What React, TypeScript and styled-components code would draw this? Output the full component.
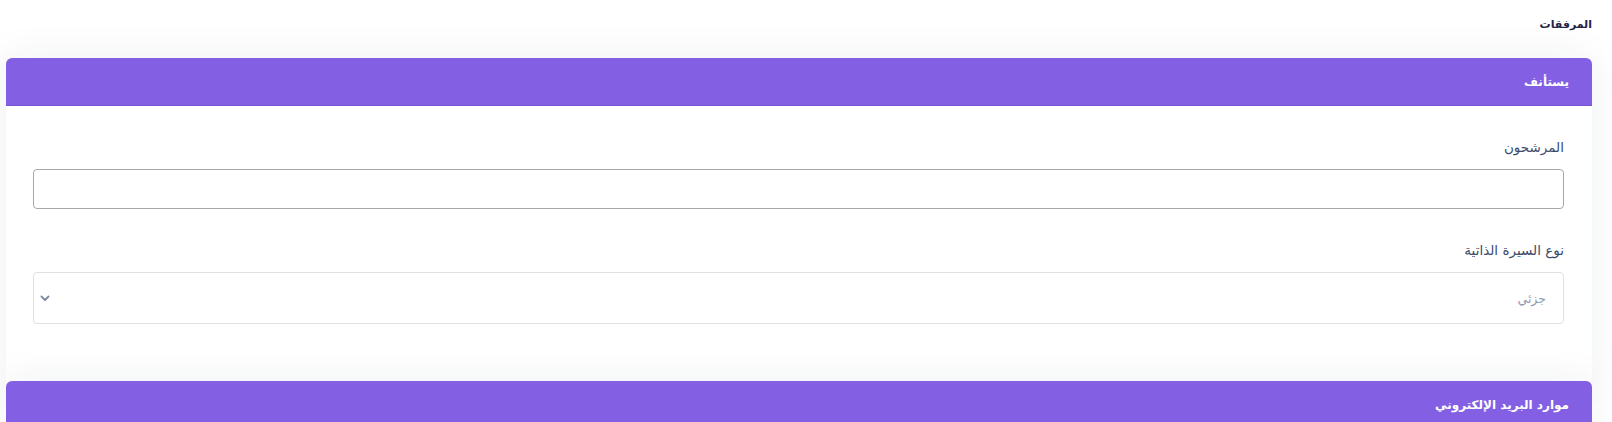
import React from "react";
import styled, { createGlobalStyle } from "styled-components";

const GlobalStyle = createGlobalStyle`
  html, body {
    margin: 0;
    padding: 0;
    background: #ffffff;
  }
  body {
    font-family: "DejaVu Sans", "Liberation Sans", Arial, sans-serif;
  }
  * { box-sizing: border-box; }
`;

const Page = styled.div`
  direction: rtl;
  padding: 14px 20px 0 6px;
  height: 422px;
  overflow: hidden;
`;

const PageTitle = styled.h6`
  margin: 0 0 23px 0;
  font-size: 11px;
  line-height: 21px;
  font-weight: 700;
  color: #1f2344;
`;

const Card = styled.section`
  background: #ffffff;
  border-radius: 6px 6px 0 0;
  box-shadow: 0 0 40px rgba(30, 40, 70, 0.07);
`;

const CardHeader = styled.div`
  height: 48px;
  display: flex;
  align-items: center;
  padding: 0 23px;
  background: #8360e3;
  border-bottom: 1px solid #7454d2;
  border-radius: 6px 6px 0 0;
  color: #ffffff;
  font-size: 12px;
  font-weight: 700;
`;

const CardBody = styled.div`
  padding: 31px 28px 57px 27px;
  display: flex;
  flex-direction: column;
`;

const FormGroup = styled.div<{ $last?: boolean }>`
  display: flex;
  flex-direction: column;
  margin-bottom: ${(p) => (p.$last ? "0" : "31px")};
`;

const Label = styled.label`
  font-size: 13.5px;
  line-height: 20px;
  color: #3b4a6b;
  margin-bottom: 12px;
`;

const TextInput = styled.input`
  height: 40px;
  border: 1px solid #a7a7a7;
  border-radius: 4px;
  background: #ffffff;
  padding: 0 12px;
  font-family: inherit;
  font-size: 13px;
  outline: none;
`;

const SelectBox = styled.div`
  height: 52px;
  border: 1px solid #dfe1e7;
  border-radius: 4px;
  background: #ffffff;
  display: flex;
  align-items: center;
  justify-content: space-between;
  padding: 0 17px 0 6px;
`;

const Placeholder = styled.span`
  font-size: 12.5px;
  color: #8d9bb2;
`;

const Chevron = styled.svg`
  width: 10px;
  height: 10px;
  color: #7d8ba3;
`;

export default function App() {
  return (
    <>
      <GlobalStyle />
      <Page>
        <PageTitle>المرفقات</PageTitle>
        <Card>
          <CardHeader>يستأنف</CardHeader>
          <CardBody>
            <FormGroup>
              <Label>المرشحون</Label>
              <TextInput type="text" />
            </FormGroup>
            <FormGroup $last>
              <Label>نوع السيرة الذاتية</Label>
              <SelectBox>
                <Placeholder>جزئي</Placeholder>
                <Chevron viewBox="0 0 10 10" fill="none">
                  <path d="M1.5 3.5 L5 7 L8.5 3.5" stroke="currentColor" strokeWidth="1.8" strokeLinecap="round" strokeLinejoin="round" />
                </Chevron>
              </SelectBox>
            </FormGroup>
          </CardBody>
        </Card>
        <Card>
          <CardHeader>موارد البريد الإلكتروني</CardHeader>
        </Card>
      </Page>
    </>
  );
}
